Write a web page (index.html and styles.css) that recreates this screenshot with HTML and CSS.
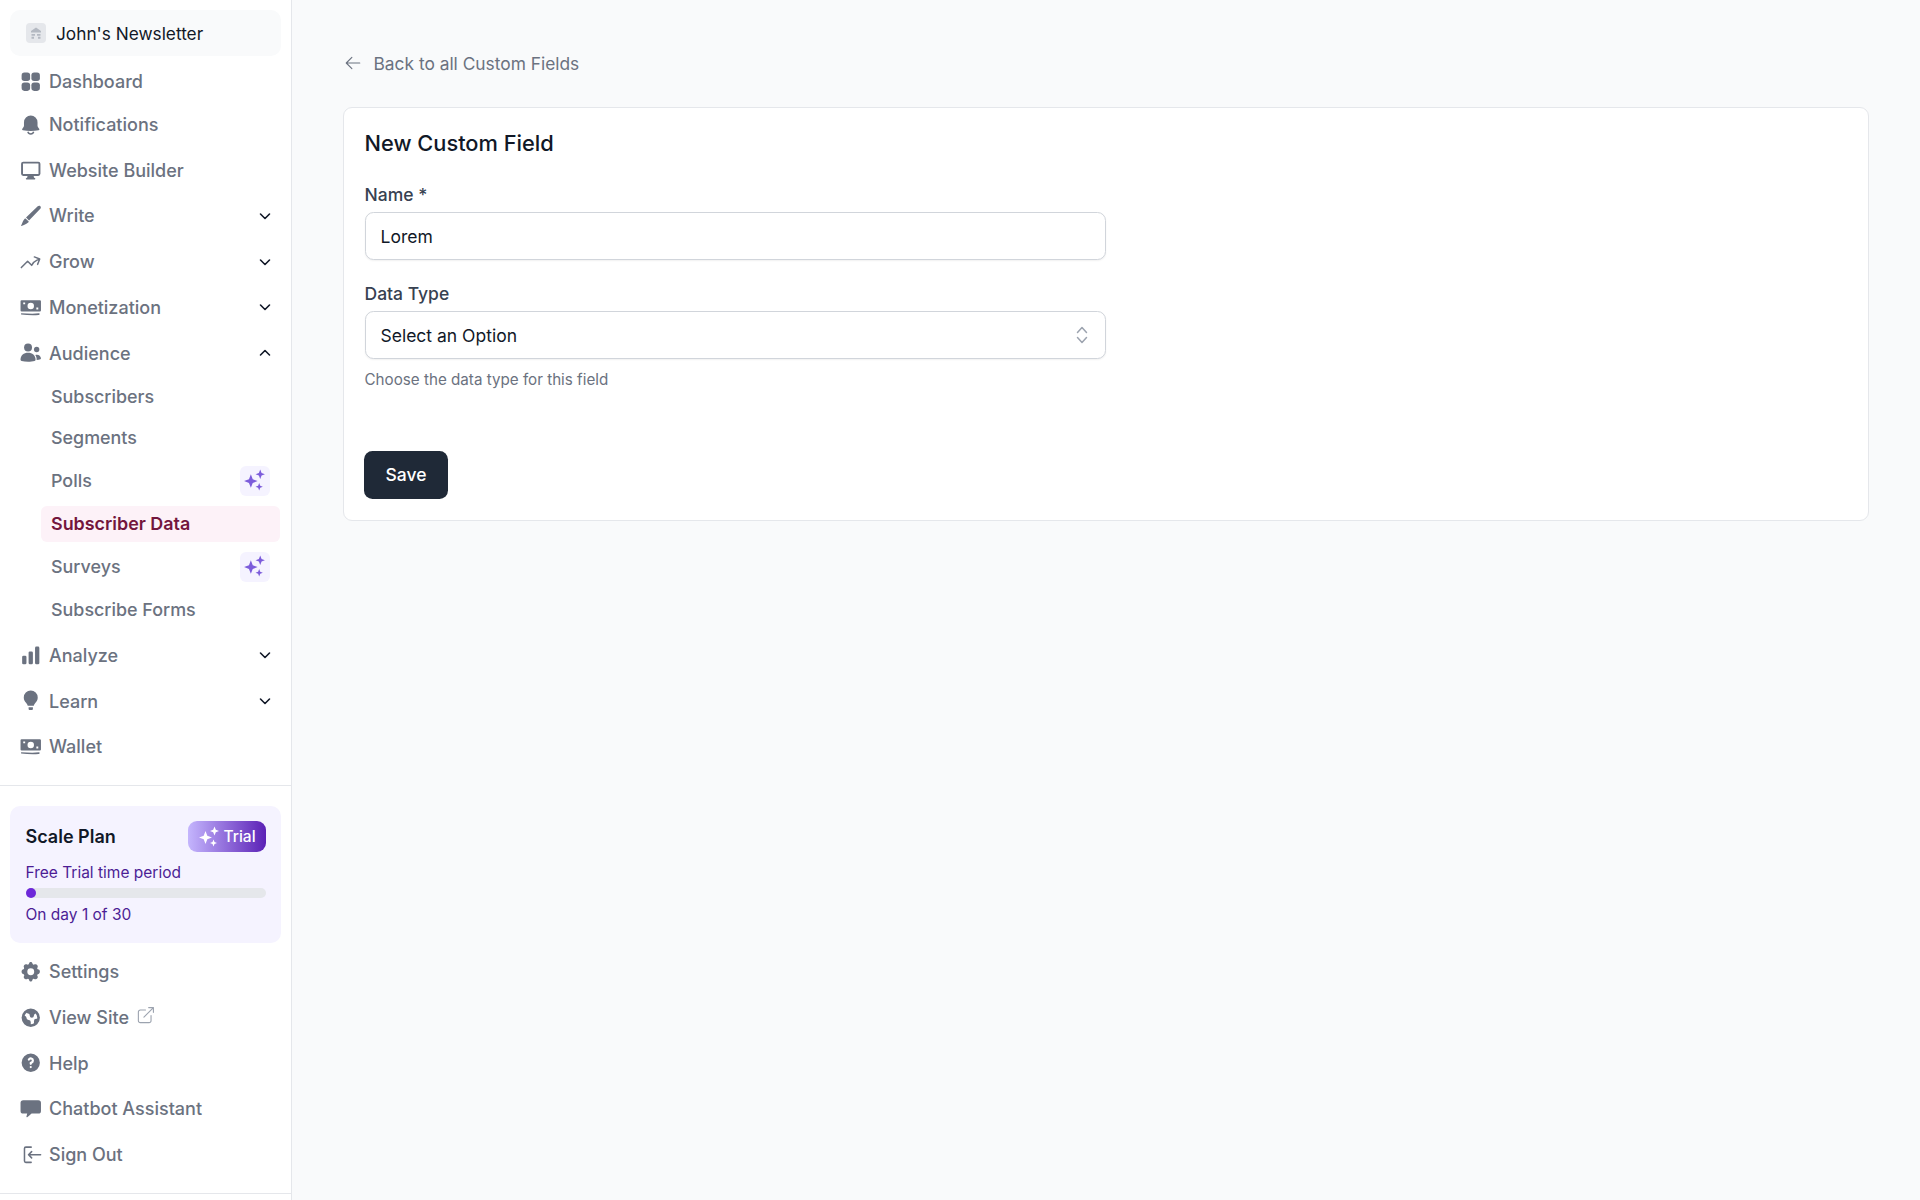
FILE: index.html
```html
<!DOCTYPE html>
<html lang="en">
<head>
<meta charset="utf-8">
<title>New Custom Field</title>
<link rel="stylesheet" href="styles.css">
</head>
<body>
<svg class="defs" width="0" height="0" aria-hidden="true">
  <symbol id="sparkles" viewBox="0 0 24 24">
    <path d="M8.500 6 10.300 10.700 15 12.500 10.300 14.300 8.500 19 6.700 14.300 2 12.500 6.700 10.700z"/>
    <path d="M17.500 1.500 18.800 4.700 22 6 18.800 7.300 17.500 10.500 16.200 7.300 13 6 16.200 4.700z"/>
    <path d="M16.500 14.500 17.500 17 20 18 17.500 19 16.500 21.500 15.500 19 13 18 15.500 17z"/>
  </symbol>
  <symbol id="money" viewBox="0 0 20 20">
    <path fill-rule="evenodd" d="M1.500 3h17a1 1 0 0 1 1 1v8.500a1 1 0 0 1-1 1h-17a1 1 0 0 1-1-1V4a1 1 0 0 1 1-1zM10 5.300a3 3 0 1 0 0 6 3 3 0 0 0 0-6zM3 5v1.800h1.800V5zM15.200 9.800v1.800H17V9.800z"/>
    <path d="M1 15c5.500.4 11 .8 16.500.2.500 0 .9.300.9.700s-.3.700-.9.800C12 17.300 6.500 16.800 1 16.300z"/>
  </symbol>
  <symbol id="chev-down" viewBox="0 0 16 16">
    <path d="M3.500 6l4.500 4.500L12.500 6" fill="none" stroke="currentColor" stroke-width="1.600" stroke-linecap="round" stroke-linejoin="round"/>
  </symbol>
</svg>
<div class="app">
  <aside class="sidebar">
    <a class="workspace">
      <span class="workspace-logo">
        <svg viewBox="0 0 20 20" class="workspace-glyph"><path d="M10 4.500 15 8v1.500H5V8zM5.500 11h3.500v1.800H5.500zM11 11h3.500v1.800H11zM5.500 13.800h2.500v2H5.500zM12 13.800h2.500v2H12z"/></svg>
      </span>
      <span>John's Newsletter</span>
    </a>
    <nav class="nav-top">
      <a class="item item-first">
        <svg class="icon" viewBox="0 0 20 20"><rect x="1.500" y="1.500" width="7.900" height="7.900" rx="2.600"/><rect x="10.600" y="1.500" width="7.900" height="7.900" rx="2.600"/><rect x="1.500" y="10.600" width="7.900" height="7.900" rx="2.600"/><rect x="10.600" y="10.600" width="7.900" height="7.900" rx="2.600"/></svg>
        <span class="label">Dashboard</span>
      </a>
      <a class="item">
        <svg class="icon" viewBox="0 0 20 20"><path d="M10 1.500a6.300 6.300 0 0 0-6.300 6.300v3.200c0 1.100-.9 2-1.500 2.800-.5.600-.2 1.300.5 1.400 2.200.3 4.700.5 7.300.5s5.100-.2 7.300-.5c.7-.1 1-.8.5-1.400-.6-.8-1.500-1.700-1.500-2.800V7.800A6.300 6.300 0 0 0 10 1.500z"/><path d="M7.300 16.500a2.800 2.800 0 0 0 5.400 0" fill="none" stroke="#6b7280" stroke-width="1.300"/></svg>
        <span class="label">Notifications</span>
      </a>
      <a class="item">
        <svg class="icon" viewBox="0 0 20 20"><path fill-rule="evenodd" d="M3 2.500h14a2 2 0 0 1 2 2v9.200a2 2 0 0 1-2 2h-4.300l.3 1.500 1 .7a.6.600 0 0 1-.3 1.100H6a.6.600 0 0 1-.3-1.100l1-.7.3-1.500H3a2 2 0 0 1-2-2V4.500a2 2 0 0 1 2-2zm0 1.800a.3.300 0 0 0-.2.200v9.200c0 .1.100.2.200.2h14a.3.300 0 0 0 .2-.2V4.500a.3.300 0 0 0-.2-.2z"/></svg>
        <span class="label">Website Builder</span>
      </a>
      <a class="item">
        <svg class="icon" viewBox="0 0 20 20"><path d="M18.900 1.100c-.7-.6-1.700-.5-2.400.1L5.600 11.600l2.800 2.800L18.900 3.500c.6-.7.700-1.700 0-2.400zM4.400 12.800c-1.100 1.100-1.800 2.400-2.400 4.200L1 19.300c-.1.200.1.300.3.200l2.400-1c1.700-.6 3-1.400 4.200-2.500.3-.3.300-.6 0-.9l-2.500-2.400c-.3-.2-.7-.2-1 .1z"/></svg>
        <span class="label">Write</span>
        <svg class="chev"><use href="#chev-down"/></svg>
      </a>
      <a class="item">
        <svg class="icon icon-line" viewBox="0 0 24 24"><path d="M1.500 18.500 8.500 11.500l4.500 4.500a12 12 0 0 1 6-5.800l3-1.300m0 0-6-2.300m6 2.300-2.300 6"/></svg>
        <span class="label">Grow</span>
        <svg class="chev"><use href="#chev-down"/></svg>
      </a>
      <a class="item">
        <svg class="icon"><use href="#money"/></svg>
        <span class="label">Monetization</span>
        <svg class="chev"><use href="#chev-down"/></svg>
      </a>
      <a class="item">
        <svg class="icon" viewBox="0 0 20 20"><circle cx="7.500" cy="5.200" r="3.700"/><circle cx="15.500" cy="7" r="2.500"/><path d="M.5 16.300c0-3.800 3-6.300 7-6.300s6.800 2.500 7 6.300c0 .7-.3 1.200-1 1.400-1.600.4-3.800.7-6 .7s-4.300-.3-6-.7c-.7-.2-1-.7-1-1.400z"/><path d="M15.500 16.700c.1-1.800-.4-3.300-1.300-4.600.5-.2 1-.3 1.500-.3 2.200 0 3.600 1.500 3.800 3.400 0 .4-.2.700-.5.800-1 .4-2.300.6-3.500.7z"/></svg>
        <span class="label">Audience</span>
        <svg class="chev chev-up"><use href="#chev-down"/></svg>
      </a>
      <div class="sub">
        <a class="sub-row sub-first"><span class="sub-link">Subscribers</span></a>
        <a class="sub-row"><span class="sub-link">Segments</span></a>
        <a class="sub-row"><span class="sub-link">Polls<span class="ai"><svg class="ai-icon"><use href="#sparkles"/></svg></span></span></a>
        <a class="sub-row"><span class="sub-link active">Subscriber Data</span></a>
        <a class="sub-row"><span class="sub-link">Surveys<span class="ai"><svg class="ai-icon"><use href="#sparkles"/></svg></span></span></a>
        <a class="sub-row"><span class="sub-link">Subscribe Forms</span></a>
      </div>
      <a class="item">
        <svg class="icon" viewBox="0 0 20 20"><rect x="2" y="10" width="4" height="8" rx="1.200"/><rect x="8" y="6" width="4" height="12" rx="1.200"/><rect x="14" y="1.500" width="4" height="16.500" rx="1.200"/></svg>
        <span class="label">Analyze</span>
        <svg class="chev"><use href="#chev-down"/></svg>
      </a>
      <a class="item">
        <svg class="icon" viewBox="0 0 20 20"><path d="M10 .5a6.500 6.500 0 0 0-6.500 6.500c0 2.300 1 3.600 2.100 4.900.8.900 1.400 1.800 1.600 2.800h5.600c.2-1 .8-1.900 1.600-2.800 1.100-1.300 2.100-2.600 2.100-4.900A6.500 6.500 0 0 0 10 .5zM8 16h4v1.700c0 .5-.4.800-.8.800H8.800c-.4 0-.8-.3-.8-.8z"/></svg>
        <span class="label">Learn</span>
        <svg class="chev"><use href="#chev-down"/></svg>
      </a>
      <a class="item">
        <svg class="icon"><use href="#money"/></svg>
        <span class="label">Wallet</span>
      </a>
    </nav>
    <hr class="divider">
    <section class="plan">
      <div class="plan-head">
        <strong class="plan-title">Scale Plan</strong>
        <span class="trial"><svg class="trial-icon"><use href="#sparkles"/></svg>Trial</span>
      </div>
      <p class="plan-text">Free Trial time period</p>
      <div class="bar"><div class="bar-dot"></div></div>
      <p class="plan-text">On day 1 of 30</p>
    </section>
    <nav class="nav-bottom">
      <a class="item">
        <svg class="icon" viewBox="0 0 20 20"><path fill-rule="evenodd" d="M11.490 2.170c-.38-1.560-2.600-1.560-2.980 0a1.532 1.532 0 0 1-2.286.948c-1.372-.836-3.442 1.234-2.606 2.606.54.886.061 2.042-.947 2.287-1.561.379-1.561 3.600 0 3.978a1.532 1.532 0 0 1 .947 2.287c-.836 1.372 1.234 3.442 2.606 2.606a1.532 1.532 0 0 1 2.287.947c.379 1.561 2.600 1.561 2.978 0a1.533 1.533 0 0 1 2.287-.947c1.372.836 3.442-1.234 2.606-2.606a1.533 1.533 0 0 1 .947-2.287c1.561-.379 1.561-3.600 0-3.978a1.532 1.532 0 0 1-.947-2.287c.836-1.372-1.234-3.442-2.606-2.606a1.532 1.532 0 0 1-2.287-.947zM10 13.200a3.200 3.200 0 1 0 0-6.400 3.200 3.200 0 0 0 0 6.400z"/></svg>
        <span class="label">Settings</span>
      </a>
      <a class="item">
        <svg class="icon" viewBox="0 0 20 20"><path fill-rule="evenodd" d="M10 18.500a8.500 8.500 0 1 0 0-17 8.500 8.500 0 0 0 0 17zM4.332 8.027a6.012 6.012 0 0 1 1.912-2.706C6.512 5.730 6.974 6 7.500 6A1.500 1.500 0 0 1 9 7.500V8a2 2 0 0 0 4 0 2 2 0 0 1 1.523-1.943A5.977 5.977 0 0 1 16 10c0 .34-.028.675-.083 1H15a2 2 0 0 0-2 2v2.197A5.973 5.973 0 0 1 10 16v-2a2 2 0 0 0-2-2 2 2 0 0 1-2-2 2 2 0 0 0-1.668-1.973z"/></svg>
        <span class="label">View Site</span>
        <svg class="external" viewBox="0 0 24 24"><path d="M12 5H5.500A2.500 2.500 0 0 0 3 7.500v11A2.500 2.500 0 0 0 5.500 21h11a2.500 2.500 0 0 0 2.500-2.500V12M10 14 22 2m0 0h-6m6 0v6"/></svg>
      </a>
      <a class="item">
        <svg class="icon" viewBox="0 0 20 20"><path fill-rule="evenodd" d="M18.500 10a8.500 8.500 0 1 1-17 0 8.500 8.500 0 0 1 17 0zm-8.500-3a1 1 0 0 0-.867.5 1 1 0 1 1-1.731-1A3 3 0 0 1 13 8a3.001 3.001 0 0 1-2 2.830V11a1 1 0 1 1-2 0v-1a1 1 0 0 1 1-1 1 1 0 1 0 0-2zm0 8a1 1 0 1 0 0-2 1 1 0 0 0 0 2z"/></svg>
        <span class="label">Help</span>
      </a>
      <a class="item">
        <svg class="icon" viewBox="0 0 20 20"><path d="M3 2h14a2.500 2.500 0 0 1 2.500 2.500v7.500a2.500 2.500 0 0 1-2.500 2.500h-6.200c-1 .8-2.500 2.600-4.100 3.300-.6.200-.9-.1-.7-.7l.7-2.600H3A2.500 2.500 0 0 1 .5 12V4.500A2.500 2.500 0 0 1 3 2z"/></svg>
        <span class="label">Chatbot Assistant</span>
      </a>
      <a class="item">
        <svg class="icon icon-line" viewBox="0 0 24 24"><path d="M12.500 3.500H6.500A1.500 1.500 0 0 0 5 5v14a1.500 1.500 0 0 0 1.500 1.500h6M13 8.500 9.500 12l3.500 3.500M9.500 12H23"/></svg>
        <span class="label">Sign Out</span>
      </a>
    </nav>
    <div class="sidebar-foot"></div>
  </aside>
  <main class="main">
    <a class="back">
      <svg class="back-icon" viewBox="0 0 24 24"><path d="M10.500 19.500 3 12m0 0 7.500-7.500M3 12h18"/></svg>
      <span>Back to all Custom Fields</span>
    </a>
    <section class="card">
      <h1 class="card-title">New Custom Field</h1>
      <label class="field-label" for="name">Name *</label>
      <input class="control" id="name" type="text" value="Lorem">
      <label class="field-label field-label-second" for="type">Data Type</label>
      <div class="select-wrap">
        <select class="control select" id="type"><option>Select an Option</option></select>
        <svg class="select-icon" viewBox="0 0 20 20"><path d="M5.500 7.500 10 2.500l4.500 5M5.500 12.500l4.500 5 4.500-5"/></svg>
      </div>
      <p class="help">Choose the data type for this field</p>
      <button class="save" type="button">Save</button>
    </section>
  </main>
</div>
</body>
</html>
```
FILE: styles.css
```css
* { box-sizing: border-box; }
html, body { margin: 0; height: 100%; }
body {
  font-family: Inter, "Liberation Sans", sans-serif;
  font-size: 17.5px;
  color: #111827;
  background: #f9fafb;
  overflow: hidden;
}
a { color: inherit; text-decoration: none; }
.defs { position: absolute; }

.app { display: flex; height: 1200px; }

.sidebar {
  flex: 0 0 292px;
  height: 1200px;
  background: #fff;
  border-right: 1.5px solid #e5e7eb;
  display: flex;
  flex-direction: column;
  padding-top: 10px;
}

.workspace {
  display: flex;
  align-items: center;
  gap: 10.5px;
  height: 46px;
  margin: 0 10.5px 0 10px;
  padding-left: 15.5px;
  font-size: 17.25px;
  background: #f9fafb;
  border-radius: 10px;
  color: #111827;
}
.workspace-logo {
  width: 20px;
  height: 20px;
  border-radius: 4px;
  background: #e5e7eb;
  display: flex;
}
.workspace-glyph { fill: #b4b9c2; width: 20px; height: 20px; }

.nav-top { margin-top: 5.5px; }
.item {
  display: flex;
  align-items: center;
  height: 45.75px;
  padding: 0 11px 0 20px;
  font-size: 18px;
  color: #6b7280;
  font-weight: 500;
}
.item-first { height: 40px; }
.label { margin-left: 7.5px; }
.icon {
  width: 21.5px;
  height: 21.5px;
  flex: none;
  fill: #6b7280;
}
.icon-line {
  fill: none;
  stroke: #6b7280;
  stroke-width: 1.700;
  stroke-linecap: round;
  stroke-linejoin: round;
}
.chev {
  width: 16px;
  height: 16px;
  margin-left: auto;
  margin-right: 7px;
  color: #111827;
}
.chev-up { transform: rotate(180deg); }

.sub-row {
  display: flex;
  align-items: center;
  height: 43px;
  padding: 0 11.5px 0 41px;
}
.sub-first { height: 40px; }
.sub { margin-bottom: 1.5px; }
.sub-link {
  flex: 1;
  height: 36px;
  display: flex;
  align-items: center;
  justify-content: space-between;
  padding: 0 10px;
  border-radius: 6px;
  font-size: 17.9px;
  color: #6b7280;
  font-weight: 500;
}
.active { background: #fdf2f8; color: #74163d; font-weight: 600; }
.ai {
  width: 30px;
  height: 30px;
  background: #f5f3ff;
  border-radius: 6px;
  display: flex;
  align-items: center;
  justify-content: center;
}
.ai-icon { width: 25px; height: 25px; fill: #7c5cdb; }

.divider {
  border: 0;
  border-top: 1.500px solid #e5e7eb;
  margin: 15px 0 20px;
}

.plan {
  margin: 0 10.5px 0 10px;
  padding: 15.500px 15px 15px 15.500px;
  height: 137px;
  background: #f5f3ff;
  border-radius: 10px;
  color: #4c1d95;
  font-size: 15.500px;
}
.plan-head { display: flex; align-items: center; justify-content: space-between; height: 31px; }
.plan-title { font-size: 18px; font-weight: 600; color: #111827; }
.trial {
  display: flex;
  align-items: center;
  gap: 3px;
  width: 78px;
  height: 31px;
  padding-left: 9px;
  border-radius: 9px;
  color: #fff;
  font-size: 15.500px;
  font-weight: 500;
  background: linear-gradient(90deg, #c4b5fd, #5b21b6);
}
.trial-icon { width: 24px; height: 24px; fill: #fff; flex: none; }
.plan-text { margin: 0; line-height: 20px; }
.plan-head + .plan-text { margin-top: 10.500px; }
.bar { height: 10px; margin: 5px 0 7px; background: #e5e7eb; border-radius: 5px; }
.bar-dot { width: 10px; height: 10px; border-radius: 50%; background: #6d28d9; }

.nav-bottom { margin-top: 6px; }
.external {
  width: 19px;
  height: 19px;
  margin: -3px 0 0 7px;
  fill: none;
  stroke: #9ca3af;
  stroke-width: 1.400;
  stroke-linecap: round;
  stroke-linejoin: round;
}
.sidebar-foot { margin-top: 15px; border-top: 1.500px solid #e5e7eb; }

.main { flex: 1; padding: 46px 51px 0 51px; min-width: 0; }
.back {
  display: flex;
  align-items: center;
  height: 34px;
  gap: 11.500px;
  font-size: 17.350px;
  color: #6b7280;
  padding-left: 1px;
}
.back-icon {
  width: 18px;
  height: 18px;
  fill: none;
  stroke: #6b7280;
  stroke-width: 1.500;
  stroke-linecap: round;
  stroke-linejoin: round;
}
.card {
  margin-top: 27px;
  height: 414px;
  background: #fff;
  border: 1.500px solid #e5e7eb;
  border-radius: 9px;
  padding: 20px 20px 20px 20.500px;
}
.card-title {
  margin: 0;
  font-size: 21.800px;
  line-height: 30px;
  font-weight: 500;
  color: #111827;
}
.field-label {
  display: block;
  margin-top: 24.700px;
  line-height: 24px;
  font-weight: 500;
  color: #374151;
}
.field-label-second { margin-top: 22px; }
.control {
  display: block;
  width: 741px;
  height: 48px;
  margin-top: 5px;
  padding: 1px 15px 0;
  border: 1.500px solid #d1d5db;
  border-radius: 8.500px;
  background: #fff;
  font: inherit;
  color: #111827;
  box-shadow: 0 1px 2px rgba(0, 0, 0, .06);
  outline: 0;
}
.select-wrap { position: relative; width: 741px; }
.select { appearance: none; -webkit-appearance: none; }
.select-icon {
  position: absolute;
  right: 14px;
  top: 13px;
  width: 20px;
  height: 22px;
  fill: none;
  stroke: #9ca3af;
  stroke-width: 1.500;
  stroke-linecap: round;
  stroke-linejoin: round;
}
.help {
  margin: 11.700px 0 0;
  font-size: 15.200px;
  line-height: 20px;
  color: #6b7280;
}
.save {
  display: block;
  margin-top: 60.500px;
  margin-left: -0.500px;
  width: 84px;
  height: 48px;
  background: #1f2937;
  color: #fff;
  border: 0;
  border-radius: 8.500px;
  font: inherit;
  font-weight: 500;
}
```
